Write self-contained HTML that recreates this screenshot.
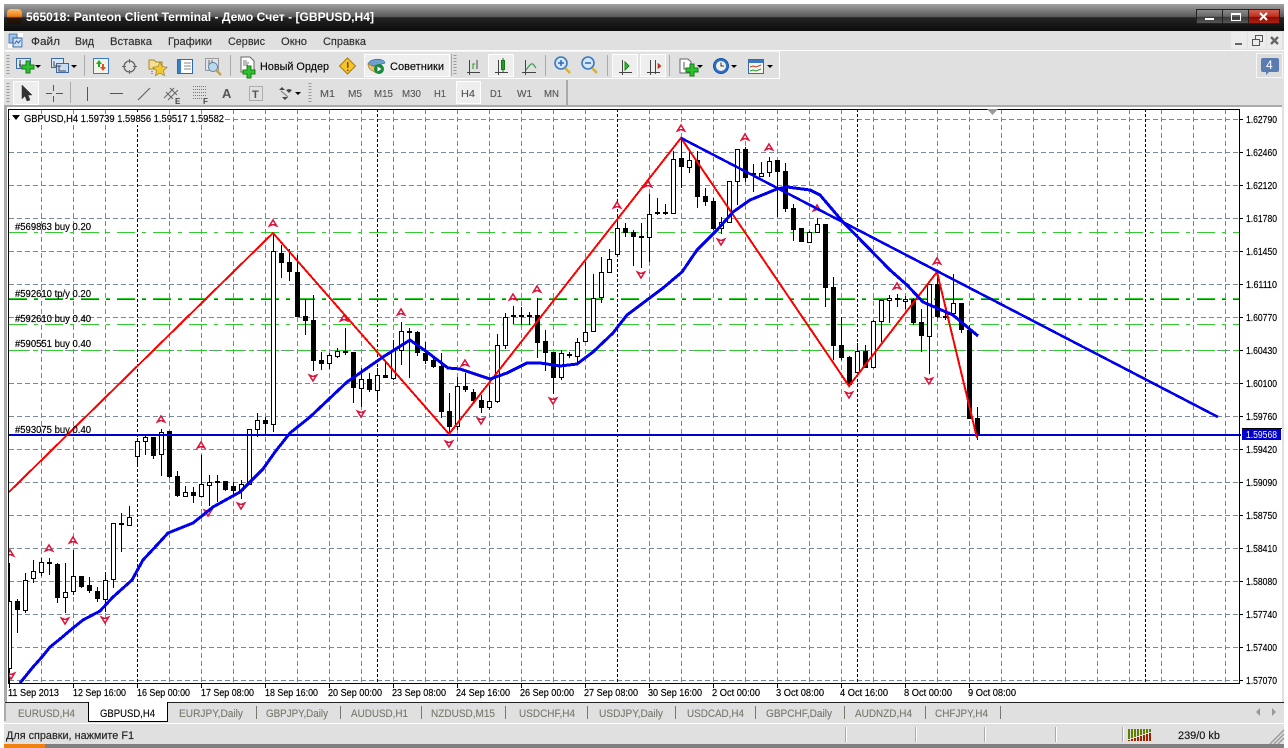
<!DOCTYPE html>
<html><head><meta charset="utf-8"><title>Panteon Client Terminal</title>
<style>
html,body{margin:0;padding:0;background:#fff;width:1288px;height:748px;overflow:hidden}
svg{display:block;position:absolute;left:0;top:0}
text{font-family:"Liberation Sans","Noto Sans CJK SC",sans-serif;font-size:11px;fill:#000}
.c{shape-rendering:crispEdges}
.m text{fill:#2e2e2e;stroke:#2e2e2e;stroke-width:.15}
.p text{font-size:10px;stroke:#000;stroke-width:.18}
.t text{font-size:11px;fill:#77776c;stroke:#77776c;stroke-width:.12}
.f text{font-size:10.5px;fill:#555;stroke:#555;stroke-width:.12}
</style></head><body>
<svg width="1288" height="748" viewBox="0 0 1288 748">
<defs>
<linearGradient id="tg" x1="0" y1="0" x2="0" y2="1"><stop offset="0" stop-color="#a2a2a2"/><stop offset=".48" stop-color="#585858"/><stop offset=".5" stop-color="#242424"/><stop offset="1" stop-color="#0c0c0c"/></linearGradient>
<linearGradient id="ig" x1="0" y1="0" x2="0" y2="1"><stop offset="0" stop-color="#f8c070"/><stop offset=".5" stop-color="#f07a10"/><stop offset=".6" stop-color="#301808"/><stop offset="1" stop-color="#1a0f05"/></linearGradient>
<linearGradient id="bg1" x1="0" y1="0" x2="0" y2="1"><stop offset="0" stop-color="#8a8a8a"/><stop offset=".5" stop-color="#666"/><stop offset=".55" stop-color="#3a3a3a"/><stop offset="1" stop-color="#555"/></linearGradient>
<linearGradient id="bg2" x1="0" y1="0" x2="0" y2="1"><stop offset="0" stop-color="#d06050"/><stop offset=".5" stop-color="#c03020"/><stop offset=".55" stop-color="#8e0c08"/><stop offset="1" stop-color="#b02010"/></linearGradient>
<g id="u"><path d="M0-4.5L5.5 4.5L0 2.2L-5.5 4.5Z" fill="#dc143c"/><path d="M0-1.5L1.6 1L-1.6 1Z" fill="#fff"/></g>
<g id="d"><path d="M0 4.5L5.5-4.5L0-2.2L-5.5-4.5Z" fill="#dc143c"/><path d="M0 1.5L1.6-1L-1.6-1Z" fill="#fff"/></g>
<g id="a"><path d="M0 0h6l-3 3z" fill="#000"/></g>
</defs>

<!-- window frame -->
<rect class="c" x="4" y="4" width="1280" height="740" fill="#e0e0e0"/>
<rect class="c" x="4" y="4" width="1280" height="27" fill="url(#tg)"/>
<rect x="7" y="9" width="15" height="15" rx="4" fill="url(#ig)"/>
<text x="26" y="21" textLength="348" lengthAdjust="spacingAndGlyphs" style="font-weight:bold;font-size:12px;fill:#fff">565018: Panteon Client Terminal - Демо Счет - [GBPUSD,H4]</text>
<g class="c">
<rect x="1196" y="9" width="84" height="15" fill="#222"/>
<rect x="1197" y="10" width="25" height="13" fill="url(#bg1)"/>
<rect x="1223" y="10" width="25" height="13" fill="url(#bg1)"/>
<rect x="1249" y="10" width="30" height="13" fill="url(#bg2)"/>
<rect x="1205" y="18" width="9" height="2" fill="#fff"/>
<path d="M1231.5 13.5h9v7h-9z M1231 14.5h10" fill="none" stroke="#fff"/>
</g>
<path d="M1260 13l7 7M1267 13l-7 7" stroke="#fff" stroke-width="2"/>

<!-- menu -->
<rect class="c" x="4" y="50" width="1280" height="1" fill="#fff"/>
<rect class="c" x="8" y="33" width="15" height="15" fill="#fff"/>
<g class="c"><rect x="9" y="34" width="8" height="9" fill="#9cc4ea" stroke="#4a70a8"/><rect x="13" y="38" width="9" height="9" fill="#cfe2f5" stroke="#3a60a0"/></g>
<path d="M14.5 44l2-3 2 2 2-3" stroke="#3060a0" fill="none"/>
<g class="m">
<text x="31" y="45" textLength="29" lengthAdjust="spacingAndGlyphs">Файл</text>
<text x="75" y="45" textLength="19" lengthAdjust="spacingAndGlyphs">Вид</text>
<text x="110" y="45" textLength="42" lengthAdjust="spacingAndGlyphs">Вставка</text>
<text x="168" y="45" textLength="44" lengthAdjust="spacingAndGlyphs">Графики</text>
<text x="228" y="45" textLength="37" lengthAdjust="spacingAndGlyphs">Сервис</text>
<text x="281" y="45" textLength="26" lengthAdjust="spacingAndGlyphs">Окно</text>
<text x="323" y="45" textLength="43" lengthAdjust="spacingAndGlyphs">Справка</text>
</g>
<g class="c">
<rect x="1231" y="32" width="16" height="17" fill="#ececec"/><rect x="1248" y="32" width="18" height="17" fill="#ececec"/><rect x="1267" y="32" width="15" height="17" fill="#ececec"/>
<rect x="1235" y="43" width="7" height="2" fill="#666"/>
<path d="M1252.5 39.5h7v6h-7z M1255.5 39v-3.5h7v6h-3" fill="none" stroke="#555"/>
</g>
<path d="M1271 37l7 7M1278 37l-7 7" stroke="#666" stroke-width="2.4"/>

<!-- toolbar 1 -->
<g class="c">
<rect x="4" y="78" width="775" height="1" fill="#fff"/>
<rect x="779" y="51" width="1" height="28" fill="#fff"/>
<rect x="5" y="51" width="774" height="1" fill="#f4f4f4"/>
<path d="M8 55V75M455 55V75M8 83V102M310 83V102" stroke="#999" stroke-width="3" stroke-dasharray="1 2" fill="none"/>
<path d="M84.5 55V76M230.5 55V76M451.5 54V76M545.5 55V76M607.5 55V76M669.5 55V76M70.5 82V103M567.5 80V105M566.5 80V105" stroke="#aaa"/>
<rect x="364.5" y="54.5" width="85" height="22" fill="#eee" stroke="#fff"/>
<rect x="488.5" y="54.5" width="25" height="22" fill="#eee" stroke="#fff"/>
<rect x="612.5" y="54.5" width="25" height="22" fill="#eee" stroke="#fff"/>
<rect x="640.5" y="54.5" width="25" height="22" fill="#eee" stroke="#fff"/>
<rect x="13.5" y="81.5" width="25" height="23" fill="#eee" stroke="#fff"/>
<rect x="456.5" y="81.5" width="24" height="22" fill="#eee" stroke="#fff"/>
<rect x="4" y="105" width="1278" height="2" fill="#aaa"/>
<rect x="4" y="107" width="1278" height="1" fill="#fff"/>
<rect x="1256.5" y="53.5" width="26" height="24" fill="#dcdcdc" stroke="#f6f6f6"/>
</g>
<!-- toolbar 1 icons -->
<g>
<rect class="c" x="16.5" y="58.5" width="14" height="10" fill="#dbe8f8" stroke="#3a68a8"/>
<path class="c" d="M20 60v7h8M19 65h2" stroke="#333" fill="none"/>
<path class="c" d="M22 65h4v-4h4v4h4v4h-4v4h-4v-4h-4z" fill="#2bc22b" stroke="#1a7a1a"/>
<use href="#a" x="35" y="65"/>
<rect class="c" x="51.5" y="58.5" width="12" height="9" fill="#dbe8f8" stroke="#3a68a8"/>
<rect class="c" x="56.5" y="63.5" width="12" height="9" fill="#c9dcf2" stroke="#3a68a8"/>
<path class="c" d="M54 61v5h7M59 66v5h7" stroke="#444" fill="none"/>
<use href="#a" x="71" y="65"/>
<rect class="c" x="93.5" y="58.5" width="15" height="15" fill="#f4f4ec" stroke="#3a78c8"/>
<path d="M99 60l-3 4h2v3h2v-3h2z" fill="#22aa22"/><path d="M103 71l3-4h-2v-3h-2v3h-2z" fill="#dd5522"/>
<circle cx="129.5" cy="66.5" r="5.5" fill="none" stroke="#666" stroke-width="1.3"/>
<path class="c" d="M129.5 59v4M129.5 70v4M122 66.5h4M133 66.5h4" stroke="#666"/>
<path d="M149 60h5l2 2h6v7h-13z" fill="#f4e090" stroke="#a08830"/>
<path d="M160 62l2.2 4.6 5 .6-3.7 3.4 1 5-4.500-2.500-4.500 2.500 1-5-3.700-3.400 5-.6z" fill="#f0c830" stroke="#a08020" stroke-width=".7"/>
<path class="c" d="M152 71v3" stroke="#555" stroke-dasharray="1 1"/>
<rect class="c" x="177.500" y="59.500" width="15" height="14" fill="#fff" stroke="#2a68b8"/><rect class="c" x="178" y="60" width="3" height="13" fill="#3a80c8"/>
<path class="c" d="M184 63h7M184 66h7M184 69h7" stroke="#888"/>
<rect class="c" x="205.500" y="58.500" width="13" height="12" fill="#e0e4ea" stroke="#999"/>
<path class="c" d="M209 60v8h7M212 60v5" stroke="#666" fill="none"/>
<circle cx="213" cy="67" r="4.500" fill="#bcd8f0" stroke="#5a80a0"/><path d="M216 70l5 5" stroke="#c8a040" stroke-width="2.300"/>

<path d="M241 57h9l4 4v11h-13z" fill="#fff" stroke="#666"/>
<path class="c" d="M243 61h4M243 63h6M243 65h5" stroke="#777"/>
<path class="c" d="M243 70h4v-4h4v4h4v4h-4v4h-4v-4h-4z" fill="#2bc22b" stroke="#1a7a1a"/>
<text x="260" y="70" textLength="69" lengthAdjust="spacingAndGlyphs" fill="#222" style="stroke:#222;stroke-width:.15">Новый Ордер</text>
<path d="M347.500 58l8 8-8 8-8-8z" fill="#f4c428" stroke="#a87a10"/>
<path class="c" d="M347 62h1.500v6h-1.500zM347 69.500h1.500v1.500h-1.500z" fill="#7a4a10"/>
<path d="M368 64c2-5 11-6 16-3l1 2-7 2c-4 1-8 1-10-1z" fill="#6ca0d0" stroke="#3a70a0" stroke-width=".7"/>
<path d="M368 64c0 4 2 6 5 7l3 2 5-2-1-5c-4 2-8 0-12-2z" fill="#e8c070" stroke="#a08030" stroke-width=".7"/>
<circle cx="379" cy="69" r="5" fill="#18883a"/><path d="M377.500 66.500l4 2.500-4 2.500z" fill="#fff"/>
<text x="390" y="70" textLength="54" lengthAdjust="spacingAndGlyphs" fill="#222" style="stroke:#222;stroke-width:.15">Советники</text>
</g>
<g fill="none">
<g class="c" stroke="#444">
<path d="M467 72.500h13M469.500 60v15M477 60v9"/>
<path d="M495 72.500h13M498.500 60v15M522 72.500h14M525.500 60v15"/>
<path d="M619 72.500h13M622.500 60v15M647 72.500h13M650.500 60v15M655.500 60v14"/>
</g>
<path class="c" d="M473 69v-5h2" stroke="#1a9a1a"/>
<rect class="c" x="501.500" y="60.500" width="3" height="9" fill="#2ec02e" stroke="#1a7a1a"/>
<path class="c" d="M503 58v14" stroke="#1a7a1a"/>
<path d="M526 70c3-4 5-7 7-6l3 4" stroke="#3a9a4a" stroke-width="1.200"/>
<path class="c" d="M625 62v8l4-4z" fill="#2ec02e" stroke="#1a8a1a"/>
<path d="M661 66l-3-2.500v5z" fill="#dd3322" stroke="#aa2211" stroke-width=".6"/>
<circle cx="561" cy="63" r="6" fill="#d4e6f8" stroke="#3a78c0" stroke-width="1.600"/>
<path d="M558 63h6M561 60v6" stroke="#2a68b8" stroke-width="1.500"/>
<path d="M565 68l5 5" stroke="#d8b030" stroke-width="2.500"/>
<circle cx="588" cy="63" r="6" fill="#d4e6f8" stroke="#3a78c0" stroke-width="1.600"/>
<path d="M585 63h6" stroke="#2a68b8" stroke-width="1.500"/>
<path d="M592 68l5 5" stroke="#d8b030" stroke-width="2.500"/>
</g>
<path d="M680 59h8l3 3v11h-11z" fill="#fff" stroke="#666"/>
<path class="c" d="M684 62v7h5" fill="none" stroke="#555"/>
<path class="c" d="M686 68h4v-4h4v4h4v4h-4v4h-4v-4h-4z" fill="#2bc22b" stroke="#1a7a1a"/>
<use href="#a" x="697" y="65"/>
<circle cx="721" cy="66" r="7.500" fill="#2a70c8" stroke="#1a50a0"/><circle cx="721" cy="66" r="5" fill="#f2f2ea"/><path d="M721 62.500V66h3" stroke="#333" fill="none"/>
<use href="#a" x="731" y="65"/>
<rect class="c" x="748.500" y="59.500" width="15" height="14" fill="#f6f6f0" stroke="#3a68a8"/><rect class="c" x="749" y="60" width="14" height="3" fill="#3a78c0"/>
<path d="M750 67l3-1 3 1 5-2" stroke="#c04020" fill="none"/><path d="M750 71l3-1 3 1 5-2" stroke="#2a9a2a" fill="none"/>
<use href="#a" x="767" y="65"/>
<path d="M1263 58h14a2 2 0 0 1 2 2v10a2 2 0 0 1-2 2h-8l-3 3v-3h-3a2 2 0 0 1-2-2v-10a2 2 0 0 1 2-2z" fill="#5a7cb0"/>
<text x="1266" y="69" style="fill:#fff;font-size:12px">4</text>

<!-- toolbar 2 icons -->
<path d="M22 85v14l3-3 2 5 3-1-2-5h4z" fill="#333" stroke="#333" stroke-width=".5"/>
<path class="c" d="M46 93.500h6M56 93.500h7M53.500 85v6M53.500 96v6" stroke="#555" fill="none"/>
<path class="c" d="M87.500 87v14M110 93.500h13" stroke="#555" fill="none"/>
<path d="M138 100l12-12" stroke="#666" stroke-width="1.200"/>
<path d="M164 98l10-10M168 100l10-10M166 92l7 7M170 88l7 7" stroke="#666" fill="none"/>
<text x="175" y="104" style="font-size:8px;font-weight:bold;fill:#444">E</text>
<path class="c" d="M193 86.500h14M193 89.500h14M193 92.500h14M193 95.500h14M193 98.500h9" stroke="#777" stroke-dasharray="1 1" fill="none"/>
<text x="203" y="104" style="font-size:8px;font-weight:bold;fill:#444">F</text>
<text x="222" y="98" style="font-size:13px;font-weight:bold;fill:#555">A</text>
<rect class="c" x="249.500" y="86.500" width="13" height="14" fill="none" stroke="#777" stroke-dasharray="1 1"/>
<text x="252" y="98" style="font-size:11px;font-weight:bold;fill:#555">T</text>
<path d="M279 90l3-3 3 3zM286 90l3 3 3-3-3-1zM282 97l3 3 3-3z" fill="#444"/><path d="M281 91l7 6" stroke="#777"/>
<use href="#a" x="295" y="92"/>
<g class="f">
<text x="320" y="97" textLength="15" lengthAdjust="spacingAndGlyphs">M1</text>
<text x="348" y="97" textLength="14" lengthAdjust="spacingAndGlyphs">M5</text>
<text x="374" y="97" textLength="19" lengthAdjust="spacingAndGlyphs">M15</text>
<text x="402" y="97" textLength="19" lengthAdjust="spacingAndGlyphs">M30</text>
<text x="434" y="97" textLength="12" lengthAdjust="spacingAndGlyphs">H1</text>
<text x="461" y="97" textLength="14" lengthAdjust="spacingAndGlyphs">H4</text>
<text x="490" y="97" textLength="12" lengthAdjust="spacingAndGlyphs">D1</text>
<text x="517" y="97" textLength="15" lengthAdjust="spacingAndGlyphs">W1</text>
<text x="544" y="97" textLength="15" lengthAdjust="spacingAndGlyphs">MN</text>
</g>

<!-- chart area -->
<rect class="c" x="7" y="108" width="1275" height="594" fill="#fff"/>
<rect class="c" x="4" y="105" width="3" height="597" fill="#aaa"/>
<g class="c" fill="none">
<path stroke="#778899" stroke-dasharray="5 3" d="M41.500 109V683M73.500 109V683M105.500 109V683M169.500 109V683M201.500 109V683M233.500 109V683M265.500 109V683M297.500 109V683M329.500 109V683M361.500 109V683M393.500 109V683M425.500 109V683M457.500 109V683M489.500 109V683M521.500 109V683M553.500 109V683M585.500 109V683M649.500 109V683M681.500 109V683M713.500 109V683M745.500 109V683M777.500 109V683M809.500 109V683M841.500 109V683M873.500 109V683M905.500 109V683M937.500 109V683M969.500 109V683M1001.500 109V683M1033.500 109V683M1065.500 109V683M1097.500 109V683M1129.500 109V683M1161.500 109V683M1193.500 109V683M1225.500 109V683"/>
<path stroke="#778899" stroke-dasharray="5 3" d="M9 119.500H1239M9 152.500H1239M9 185.500H1239M9 218.500H1239M9 251.500H1239M9 284.500H1239M9 317.500H1239M9 350.500H1239M9 383.500H1239M9 416.500H1239M9 449.500H1239M9 482.500H1239M9 515.500H1239M9 548.500H1239M9 581.500H1239M9 614.500H1239M9 647.500H1239M9 680.500H1239"/>
<path stroke="#000" stroke-dasharray="3 2" d="M137.500 109V683M377.500 109V683M617.500 109V683M857.500 109V683M1145.500 109V683"/>
<!-- order lines -->
<path stroke="#e81010" stroke-dasharray="18 7 4 7" d="M9 299.500H1239"/>
<path stroke="#30cc30" stroke-dasharray="18 7 4 7" d="M9 232.500H1239M9 298.500H1239M9 324.500H1239M9 350.500H1239"/>
<!-- wicks -->
<path stroke="#000" d="M9.500 563V685M17.500 599V633M25.500 573V613M33.500 560V583M41.500 558V576M49.500 558V575M57.500 563V603M65.500 563V613M73.500 550V595M81.500 576V588M89.500 577V593M97.500 587V602M105.500 572V612M113.500 523V588M121.500 513V552M129.500 506V526M137.500 438V465M145.500 435V455M153.500 437V459M161.500 429V476M169.500 431V478M177.500 471V497M185.500 486V497M193.500 487V503M201.500 455V497M209.500 475V506M217.500 475V502M225.500 481V491M233.500 482V497M241.500 480V499M249.500 429V484M257.500 413V437M265.500 417V434M273.500 233V432M281.500 245V278M289.500 249V281M297.500 255V317M305.500 299V335M313.500 295V371M321.500 352V370M329.500 353V369M337.500 348V358M345.500 328V355M353.500 352V403M361.500 368V407M369.500 373V392M377.500 368V400M385.500 360V378M393.500 340V380M401.500 322V365M409.500 328V378M417.500 331V356M425.500 342V364M433.500 358V368M441.500 353V418M449.500 393V436M457.500 377V430M465.500 373V392M473.500 389V402M481.500 395V413M489.500 385V410M497.500 334V403M505.500 313V349M513.500 306V324M521.500 307V325M529.500 312V325M537.500 298V358M545.500 330V371M553.500 352V394M561.500 350V380M569.500 352V358M577.500 338V363M585.500 262V342M593.500 274V332M601.500 257V303M609.500 249V273M617.500 215V255M625.500 223V237M633.500 230V266M641.500 223V268M649.500 194V262M657.500 198V215M665.500 204V215M673.500 151V213M681.500 139V188M689.500 152V173M697.500 151V208M705.500 188V206M713.500 198V230M721.500 217V234M729.500 181V222M737.500 149V205M745.500 147V182M753.500 164V192M761.500 162V177M769.500 157V177M777.500 160V217M785.500 163V212M793.500 204V241M801.500 228V242M809.500 231V243M817.500 218V233M825.500 224V307M833.500 277V360M841.500 317V360M849.500 356V387M857.500 343V377M865.500 345V368M873.500 320V368M881.500 300V342M889.500 295V323M897.500 294V307M905.500 296V309M913.500 298V325M921.500 309V352M929.500 284V374M937.500 272V318M945.500 312V320M953.500 274V315M961.500 303V333M969.500 325V419M977.500 407V440"/>
<!-- black bodies -->
<path fill="#000" d="M15 601h5v9h-5zM55 564h5v34h-5zM79 576h5v11h-5zM87 585h5v6h-5zM95 591h5v8h-5zM151 437h5v19h-5zM167 431h5v46h-5zM175 476h5v20h-5zM191 492h5v4h-5zM223 481h5v9h-5zM231 486h5v5h-5zM263 420h5v4h-5zM279 253h5v10h-5zM287 262h5v10h-5zM295 272h5v45h-5zM303 316h5v5h-5zM311 320h5v41h-5zM319 360h5v4h-5zM351 352h5v36h-5zM367 379h5v11h-5zM415 332h5v21h-5zM423 353h5v8h-5zM431 360h5v7h-5zM439 366h5v46h-5zM447 411h5v16h-5zM463 386h5v4h-5zM471 392h5v9h-5zM479 400h5v8h-5zM535 315h5v28h-5zM543 341h5v12h-5zM551 352h5v26h-5zM623 228h5v5h-5zM631 232h5v5h-5zM679 158h5v9h-5zM695 160h5v37h-5zM703 196h5v6h-5zM711 201h5v28h-5zM743 149h5v29h-5zM775 160h5v12h-5zM783 171h5v38h-5zM791 208h5v22h-5zM799 228h5v14h-5zM823 224h5v64h-5zM831 287h5v59h-5zM839 345h5v13h-5zM847 357h5v28h-5zM863 351h5v17h-5zM911 299h5v24h-5zM919 322h5v14h-5zM935 284h5v33h-5zM959 303h5v27h-5zM967 330h5v89h-5zM975 418h5v17h-5z"/>
<path fill="#000" d="M47 562h5v2h-5zM119 523h5v2h-5zM215 481h5v2h-5zM343 351h5v2h-5zM383 375h5v3h-5zM407 331h5v2h-5zM511 315h5v2h-5zM519 315h5v2h-5zM527 315h5v2h-5zM567 354h5v2h-5zM639 236h5v2h-5zM655 212h5v2h-5zM663 212h5v2h-5zM751 173h5v2h-5zM895 298h5v2h-5zM943 316h5v2h-5z"/>
<!-- white bodies -->
<path fill="#fff" stroke="#000" d="M7.500 601.500h4v67h-4zM23.500 580.500h4v30h-4zM31.500 571.500h4v7h-4zM39.500 562.500h4v10h-4zM63.500 592.500h4v5h-4zM71.500 576.500h4v15h-4zM103.500 580.500h4v19h-4zM111.500 523.500h4v56h-4zM127.500 517.500h4v8h-4zM135.500 441.500h4v15h-4zM143.500 437.500h4v4h-4zM159.500 432.500h4v22h-4zM183.500 492.500h4v4h-4zM199.500 484.500h4v12h-4zM207.500 482.500h4v3h-4zM239.500 484.500h4v6h-4zM247.500 429.500h4v55h-4zM255.500 420.500h4v9h-4zM271.500 251.500h4v173h-4zM327.500 355.500h4v8h-4zM335.500 351.500h4v5h-4zM359.500 379.500h4v9h-4zM375.500 375.500h4v15h-4zM391.500 350.500h4v28h-4zM399.500 331.500h4v19h-4zM455.500 386.500h4v40h-4zM487.500 401.500h4v6h-4zM495.500 345.500h4v56h-4zM503.500 317.500h4v28h-4zM559.500 353.500h4v24h-4zM575.500 342.500h4v14h-4zM583.500 332.500h4v9h-4zM591.500 298.500h4v33h-4zM599.500 272.500h4v25h-4zM607.500 259.500h4v13h-4zM615.500 228.500h4v26h-4zM647.500 214.500h4v23h-4zM671.500 159.500h4v54h-4zM687.500 160.500h4v7h-4zM719.500 222.500h4v6h-4zM727.500 181.500h4v41h-4zM735.500 149.500h4v32h-4zM759.500 173.500h4v3h-4zM767.500 161.500h4v11h-4zM807.500 232.500h4v10h-4zM815.500 224.500h4v8h-4zM855.500 351.500h4v21h-4zM871.500 321.500h4v46h-4zM879.500 300.500h4v21h-4zM887.500 298.500h4v2h-4zM903.500 299.500h4v2h-4zM927.500 284.500h4v52h-4zM951.500 303.500h4v10h-4z"/>
</g>
<!-- arrows -->
<use href="#u" x="161" y="419"/><use href="#u" x="201" y="445"/><use href="#u" x="49" y="548"/><use href="#u" x="73" y="540"/><use href="#u" x="10" y="553"/>
<use href="#d" x="65" y="621"/><use href="#d" x="105" y="620"/><use href="#d" x="208" y="513"/><use href="#d" x="241" y="506"/><use href="#d" x="11" y="676"/>
<use href="#u" x="273" y="223"/><use href="#u" x="344" y="318"/><use href="#u" x="401" y="312"/><use href="#u" x="465" y="363"/><use href="#u" x="513" y="297"/><use href="#u" x="537" y="289"/>
<use href="#d" x="313" y="378"/><use href="#d" x="361" y="414"/><use href="#d" x="449" y="444"/><use href="#d" x="481" y="421"/><use href="#d" x="553" y="401"/>
<use href="#u" x="617" y="205"/><use href="#u" x="648" y="184"/><use href="#u" x="681" y="128"/><use href="#u" x="745" y="137"/><use href="#u" x="769" y="147"/><use href="#u" x="817" y="208"/>
<use href="#d" x="641" y="275"/><use href="#d" x="721" y="242"/>
<use href="#u" x="897" y="286"/><use href="#u" x="937" y="261"/><use href="#d" x="849" y="395"/><use href="#d" x="929" y="381"/>
<rect class="c" x="4" y="540" width="5" height="145" fill="#fff"/><rect class="c" x="4" y="540" width="3" height="145" fill="#aaa"/>
<!-- lines -->
<g class="c" fill="none">
<path stroke="#0000cc" stroke-width="2" d="M9 435H1241"/>
<path stroke="#ff0000" stroke-width="2" d="M9 492L273 233L449 434L681 138L849 386L937 272L977 438"/>
<path stroke="#0000ee" stroke-width="3" d="M20 683L33 667L42 657L50 647L60 639L73 628L83 620L100 611L113 597L132 580L143 560L157 545L168 533L193 523L213 507L240 492L263 469L275 452L290 433L310 417L347 382L360 373L383 357L410 340L427 352L448 368L460 369L490 379L507 373L527 363L540 363L560 366L577 364L593 352L613 333L627 315L647 300L663 288L682 272L697 250L717 230L733 212L750 200L777 189L787 187L810 190L820 195L843 222L890 270L907 285L923 302L953 315L978 336"/>
<path stroke="#0000ee" stroke-width="2.600" d="M681 138L1218 417"/>
<path stroke="#000" d="M8.500 109V683M8 109.500H1240M8 683.500H1240M1239.500 109V684"/>
<path stroke="#000" d="M9.500 684v4M73.500 684v4M137.500 684v4M201.500 684v4M265.500 684v4M329.500 684v4M393.500 684v4M457.500 684v4M521.500 684v4M585.500 684v4M649.500 684v4M713.500 684v4M777.500 684v4M841.500 684v4M905.500 684v4M969.500 684v4"/>
<path stroke="#000" d="M1240 119.500h3M1240 152.500h3M1240 185.500h3M1240 218.500h3M1240 251.500h3M1240 284.500h3M1240 317.500h3M1240 350.500h3M1240 383.500h3M1240 416.500h3M1240 449.500h3M1240 482.500h3M1240 515.500h3M1240 548.500h3M1240 581.500h3M1240 614.500h3M1240 647.500h3M1240 680.500h3"/>
</g>
<rect class="c" x="10" y="114" width="215" height="11" fill="#fff"/>
<path d="M12 115h8l-4 5z" fill="#000"/>
<path d="M987 109h11l-5.500 6z" fill="#999"/>
<g class="p">
<text x="24" y="122" textLength="200" lengthAdjust="spacingAndGlyphs">GBPUSD,H4  1.59739 1.59856 1.59517 1.59582</text>
<text x="15" y="230" textLength="76" lengthAdjust="spacingAndGlyphs">#569863 buy 0.20</text>
<text x="15" y="297" textLength="76" lengthAdjust="spacingAndGlyphs">#592610 tp/y 0.20</text>
<text x="15" y="322" textLength="76" lengthAdjust="spacingAndGlyphs">#592610 buy 0.40</text>
<text x="15" y="347" textLength="76" lengthAdjust="spacingAndGlyphs">#590551 buy 0.40</text>
<text x="15" y="433" textLength="76" lengthAdjust="spacingAndGlyphs">#593075 buy 0.40</text>
<text x="1246" y="123" textLength="31" lengthAdjust="spacingAndGlyphs">1.62790</text>
<text x="1246" y="156" textLength="31" lengthAdjust="spacingAndGlyphs">1.62460</text>
<text x="1246" y="189" textLength="31" lengthAdjust="spacingAndGlyphs">1.62120</text>
<text x="1246" y="222" textLength="31" lengthAdjust="spacingAndGlyphs">1.61780</text>
<text x="1246" y="255" textLength="31" lengthAdjust="spacingAndGlyphs">1.61450</text>
<text x="1246" y="288" textLength="31" lengthAdjust="spacingAndGlyphs">1.61110</text>
<text x="1246" y="321" textLength="31" lengthAdjust="spacingAndGlyphs">1.60770</text>
<text x="1246" y="354" textLength="31" lengthAdjust="spacingAndGlyphs">1.60430</text>
<text x="1246" y="387" textLength="31" lengthAdjust="spacingAndGlyphs">1.60100</text>
<text x="1246" y="420" textLength="31" lengthAdjust="spacingAndGlyphs">1.59760</text>
<text x="1246" y="453" textLength="31" lengthAdjust="spacingAndGlyphs">1.59420</text>
<text x="1246" y="486" textLength="31" lengthAdjust="spacingAndGlyphs">1.59090</text>
<text x="1246" y="519" textLength="31" lengthAdjust="spacingAndGlyphs">1.58750</text>
<text x="1246" y="552" textLength="31" lengthAdjust="spacingAndGlyphs">1.58410</text>
<text x="1246" y="585" textLength="31" lengthAdjust="spacingAndGlyphs">1.58080</text>
<text x="1246" y="618" textLength="31" lengthAdjust="spacingAndGlyphs">1.57740</text>
<text x="1246" y="651" textLength="31" lengthAdjust="spacingAndGlyphs">1.57400</text>
<text x="1246" y="684" textLength="31" lengthAdjust="spacingAndGlyphs">1.57070</text>
</g>
<rect class="c" x="1242" y="428" width="40" height="1" fill="#000"/>
<rect class="c" x="1242" y="429" width="39" height="11" fill="#0000cc"/>
<text x="1246" y="438" textLength="31" lengthAdjust="spacingAndGlyphs" style="font-size:10px;fill:#fff">1.59568</text>
<g class="p">
<text x="8" y="696" textLength="51" lengthAdjust="spacingAndGlyphs">11 Sep 2013</text>
<text x="73" y="696" textLength="53" lengthAdjust="spacingAndGlyphs">12 Sep 16:00</text>
<text x="137" y="696" textLength="53" lengthAdjust="spacingAndGlyphs">16 Sep 00:00</text>
<text x="201" y="696" textLength="53" lengthAdjust="spacingAndGlyphs">17 Sep 08:00</text>
<text x="265" y="696" textLength="53" lengthAdjust="spacingAndGlyphs">18 Sep 16:00</text>
<text x="328" y="696" textLength="54" lengthAdjust="spacingAndGlyphs">20 Sep 00:00</text>
<text x="392" y="696" textLength="54" lengthAdjust="spacingAndGlyphs">23 Sep 08:00</text>
<text x="456" y="696" textLength="54" lengthAdjust="spacingAndGlyphs">24 Sep 16:00</text>
<text x="520" y="696" textLength="54" lengthAdjust="spacingAndGlyphs">26 Sep 00:00</text>
<text x="584" y="696" textLength="54" lengthAdjust="spacingAndGlyphs">27 Sep 08:00</text>
<text x="648" y="696" textLength="54" lengthAdjust="spacingAndGlyphs">30 Sep 16:00</text>
<text x="712" y="696" textLength="48" lengthAdjust="spacingAndGlyphs">2 Oct 00:00</text>
<text x="776" y="696" textLength="48" lengthAdjust="spacingAndGlyphs">3 Oct 08:00</text>
<text x="840" y="696" textLength="48" lengthAdjust="spacingAndGlyphs">4 Oct 16:00</text>
<text x="904" y="696" textLength="48" lengthAdjust="spacingAndGlyphs">8 Oct 00:00</text>
<text x="968" y="696" textLength="48" lengthAdjust="spacingAndGlyphs">9 Oct 08:00</text>
</g>

<!-- tabs -->
<g class="c">
<rect x="5" y="702" width="1279" height="1" fill="#222"/>
<rect x="4" y="703" width="1280" height="20" fill="#e0e0e0"/>
<rect x="4" y="723" width="1280" height="1" fill="#fff"/>
<rect x="4" y="703" width="2" height="18" fill="#aaa"/>
<rect x="89" y="702" width="78" height="20" fill="#fff"/>
<path d="M88.500 702V722M167.500 702V722M88 721.500H168" stroke="#000" fill="none"/>
<path d="M256.500 706v13M340.500 706v13M421.500 706v13M505.500 706v13M587.500 706v13M675.500 706v13M755.500 706v13M844.500 706v13M925.500 706v13M1000.500 706v13" stroke="#77776c" fill="none"/>
</g>
<g class="t">
<text x="18" y="717" textLength="57" lengthAdjust="spacingAndGlyphs">EURUSD,H4</text>
<text x="100" y="717" textLength="55" lengthAdjust="spacingAndGlyphs" style="fill:#000;stroke:#000">GBPUSD,H4</text>
<text x="179" y="717" textLength="64" lengthAdjust="spacingAndGlyphs">EURJPY,Daily</text>
<text x="266" y="717" textLength="62" lengthAdjust="spacingAndGlyphs">GBPJPY,Daily</text>
<text x="351" y="717" textLength="57" lengthAdjust="spacingAndGlyphs">AUDUSD,H1</text>
<text x="431" y="717" textLength="64" lengthAdjust="spacingAndGlyphs">NZDUSD,M15</text>
<text x="519" y="717" textLength="56" lengthAdjust="spacingAndGlyphs">USDCHF,H4</text>
<text x="599" y="717" textLength="64" lengthAdjust="spacingAndGlyphs">USDJPY,Daily</text>
<text x="687" y="717" textLength="57" lengthAdjust="spacingAndGlyphs">USDCAD,H4</text>
<text x="766" y="717" textLength="66" lengthAdjust="spacingAndGlyphs">GBPCHF,Daily</text>
<text x="855" y="717" textLength="57" lengthAdjust="spacingAndGlyphs">AUDNZD,H4</text>
<text x="935" y="717" textLength="53" lengthAdjust="spacingAndGlyphs">CHFJPY,H4</text>
</g>
<path d="M1260 708v8l-4-4zM1272 708v8l4-4z" fill="#999"/>

<!-- status -->
<text x="6" y="739" textLength="128" lengthAdjust="spacingAndGlyphs" style="font-size:11px;fill:#222;stroke:#222;stroke-width:.15">Для справки, нажмите F1</text>
<path class="c" d="M846.500 727v15M916.500 727v15M985.500 727v15M1056.500 727v15M1123.500 727v15" stroke="#fff" fill="none"/>
<path class="c" d="M845.500 727v15M915.500 727v15M984.500 727v15M1055.500 727v15M1122.500 727v15" stroke="#aaa" fill="none"/>
<g class="c">
<path fill="#5f7f00" d="M1128 729h2v10h-2zM1131 729h2v9h-2zM1134 729h2v8h-2zM1137 729h2v7h-2zM1140 729h2v6h-2zM1143 729h2v5h-2zM1146 729h2v4h-2zM1149 729h2v3h-2z"/>
<path fill="#a02000" d="M1128 740h2v1h-2zM1131 739h2v2h-2zM1134 738h2v3h-2zM1137 737h2v4h-2zM1140 736h2v5h-2zM1143 735h2v6h-2zM1146 734h2v7h-2zM1149 733h2v8h-2z"/>
</g>
<text x="1178" y="739" textLength="42" lengthAdjust="spacingAndGlyphs" style="font-size:11px;fill:#111;stroke:#111;stroke-width:.15">239/0 kb</text>
<path d="M1270 744l14-14M1274 744l10-10M1278 744l6-6" stroke="#999" stroke-width="1.400" fill="none"/>
<g class="c">
<rect x="4" y="744" width="1280" height="4" fill="#808080"/>
<rect x="4" y="744" width="41" height="4" fill="#f08010"/>
<rect x="0" y="744" width="4" height="4" fill="#fff"/>
<rect x="1284" y="744" width="4" height="4" fill="#fff"/>
</g>
</svg>
</body></html>
